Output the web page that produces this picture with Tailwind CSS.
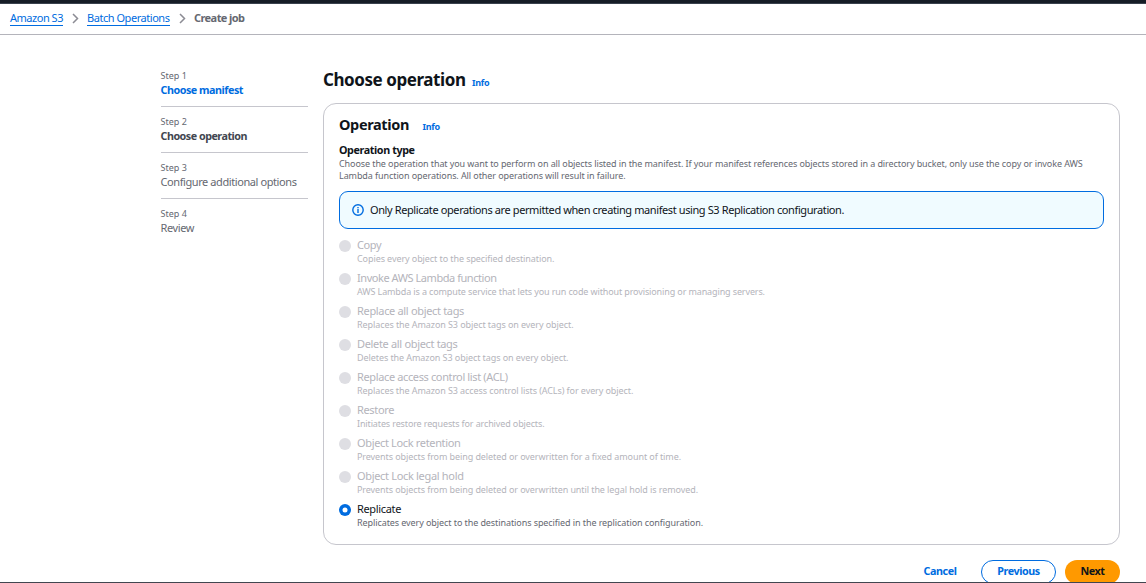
<!DOCTYPE html>
<html lang="en">
<head>
<meta charset="utf-8">
<title>Create job</title>
<script src="https://cdn.jsdelivr.net/npm/@tailwindcss/browser@4"></script>
</head>
<body class="flex h-[583px] w-[1146px] flex-col overflow-hidden border-b border-[#424650] bg-white font-['Noto_Sans',sans-serif] text-[11px] leading-[14px] text-[#0f141a] whitespace-nowrap">
<div class="h-1 shrink-0 border-b border-[#39414d] bg-[#161d26]"></div>
<nav class="flex h-[31px] shrink-0 items-start border-b border-[#b4b4bb] pt-[7px] pl-2.5">
  <a class="h-[15px] w-[53px] border-b border-[#006ce0] tracking-[-0.478px] text-[#006ce0]">Amazon S3</a>
  <svg class="mt-[2px] ml-[9px] h-[11px] w-[7px]" viewBox="0 0 7 11" fill="none" stroke="#8c8c94" stroke-width="1.5"><path d="M1 1l4.5 4.5L1 10"/></svg>
  <a class="ml-2 h-[15px] w-[83px] border-b border-[#006ce0] tracking-[-0.457px] text-[#006ce0]">Batch Operations</a>
  <svg class="mt-[2px] ml-[9px] h-[11px] w-[7px]" viewBox="0 0 7 11" fill="none" stroke="#8c8c94" stroke-width="1.5"><path d="M1 1l4.5 4.5L1 10"/></svg>
  <span class="ml-2 font-bold tracking-[-0.572px] text-[#656871]">Create job</span>
</nav>
<main class="flex min-h-0 flex-1 pl-[160px]">
  <aside class="mt-[35px] w-[148px] shrink-0 pl-[0.5px] text-[#656871]">
    <div class="h-[37px] border-b border-[#c6c6cd]"><div class="text-[9px] leading-3">Step 1</div><div class="mt-px text-[10.75px] font-bold tracking-[-0.48px] text-[#006ce0]">Choose manifest</div></div>
    <div class="h-[46px] border-b border-[#c6c6cd] pt-[9px]"><div class="text-[9px] leading-3">Step 2</div><div class="mt-px text-[10.75px] font-bold tracking-[-0.5px] text-[#424650]">Choose operation</div></div>
    <div class="h-[46px] border-b border-[#c6c6cd] pt-[9px]"><div class="text-[9px] leading-3">Step 3</div><div class="mt-px tracking-[-0.414px]">Configure additional options</div></div>
    <div class="pt-[9px]"><div class="text-[9px] leading-3">Step 4</div><div class="mt-px tracking-[-0.397px]">Review</div></div>
  </aside>
  <section class="ml-[15px] w-[797px] shrink-0">
    <div class="flex h-[68px] items-baseline pt-[33px]">
      <h1 class="w-[149px] text-[17px] leading-6 font-bold tracking-[-0.43px]">Choose operation</h1>
      <a class="text-[9px] font-bold tracking-[-0.24px] text-[#006ce0]">Info</a>
    </div>
    <div class="h-[442px] rounded-[13px] border border-[#c6c6cd] px-[15px]">
      <div class="flex items-baseline pt-[10px]">
        <h2 class="w-[83.5px] text-[14.5px] leading-5 font-bold tracking-[-0.36px]">Operation</h2>
        <a class="text-[9px] font-bold tracking-[-0.24px] text-[#006ce0]">Info</a>
      </div>
      <div class="mt-[9px] text-[10.75px] font-bold tracking-[-0.4px]">Operation type</div>
      <p class="mt-px text-[9px] leading-3 text-[#656871]"><span class="tracking-[-0.09px]">Choose the operation that you want to perform on all objects listed in the manifest. If your manifest references objects stored in a directory bucket, only use the copy or invoke AWS</span><br><span class="tracking-[-0.087px]">Lambda function operations. All other operations will result in failure.</span></p>
      <div class="mt-[9px] flex h-[38px] items-center rounded-[9px] border border-[#006ce0] bg-[#f0fbff] pl-3">
        <svg class="h-3 w-3" viewBox="0 0 12 12" fill="none" stroke="#006ce0" stroke-width="1.4"><circle cx="6" cy="6" r="5.2"/><path d="M6 2.9v1.3M6 5v4" stroke-width="1.4"/></svg>
        <span class="ml-1.5 tracking-[-0.398px]">Only Replicate operations are permitted when creating manifest using S3 Replication configuration.</span>
      </div>
      <div class="mt-[9px] grid auto-rows-[33px] text-[#b4b4bb]">
        <div class="flex"><i class="mt-[2px] mr-1.5 h-3 w-3 rounded-full bg-[#dedee3]"></i><div><div class="tracking-[-0.4px]">Copy</div><div class="text-[9px] leading-[13px] tracking-[-0.085px]">Copies every object to the specified destination.</div></div></div>
        <div class="flex"><i class="mt-[2px] mr-1.5 h-3 w-3 rounded-full bg-[#dedee3]"></i><div><div class="tracking-[-0.447px]">Invoke AWS Lambda function</div><div class="text-[9px] leading-[13px] tracking-[-0.124px]">AWS Lambda is a compute service that lets you run code without provisioning or managing servers.</div></div></div>
        <div class="flex"><i class="mt-[2px] mr-1.5 h-3 w-3 rounded-full bg-[#dedee3]"></i><div><div class="tracking-[-0.331px]">Replace all object tags</div><div class="text-[9px] leading-[13px] tracking-[-0.083px]">Replaces the Amazon S3 object tags on every object.</div></div></div>
        <div class="flex"><i class="mt-[2px] mr-1.5 h-3 w-3 rounded-full bg-[#dedee3]"></i><div><div class="tracking-[-0.331px]">Delete all object tags</div><div class="text-[9px] leading-[13px] tracking-[-0.075px]">Deletes the Amazon S3 object tags on every object.</div></div></div>
        <div class="flex"><i class="mt-[2px] mr-1.5 h-3 w-3 rounded-full bg-[#dedee3]"></i><div><div class="tracking-[-0.37px]">Replace access control list (ACL)</div><div class="text-[9px] leading-[13px] tracking-[-0.085px]">Replaces the Amazon S3 access control lists (ACLs) for every object.</div></div></div>
        <div class="flex"><i class="mt-[2px] mr-1.5 h-3 w-3 rounded-full bg-[#dedee3]"></i><div><div class="tracking-[-0.35px]">Restore</div><div class="text-[9px] leading-[13px] tracking-[-0.13px]">Initiates restore requests for archived objects.</div></div></div>
        <div class="flex"><i class="mt-[2px] mr-1.5 h-3 w-3 rounded-full bg-[#dedee3]"></i><div><div class="tracking-[-0.343px]">Object Lock retention</div><div class="text-[9px] leading-[13px] tracking-[-0.085px]">Prevents objects from being deleted or overwritten for a fixed amount of time.</div></div></div>
        <div class="flex"><i class="mt-[2px] mr-1.5 h-3 w-3 rounded-full bg-[#dedee3]"></i><div><div class="tracking-[-0.32px]">Object Lock legal hold</div><div class="text-[9px] leading-[13px] tracking-[-0.085px]">Prevents objects from being deleted or overwritten until the legal hold is removed.</div></div></div>
        <div class="flex"><svg class="mt-[2px] mr-1.5 h-3 w-3" viewBox="0 0 12 12"><circle cx="6" cy="6" r="6" fill="#006ce0"/><circle cx="6" cy="6" r="2.5" fill="#fff"/></svg><div><div class="tracking-[-0.346px] text-[#0f141a]">Replicate</div><div class="text-[9px] leading-[13px] tracking-[-0.082px] text-[#656871]">Replicates every object to the destinations specified in the replication configuration.</div></div></div>
      </div>
    </div>
    <div class="mt-[15px] flex justify-end text-[10.75px] font-bold tracking-[-0.43px]">
      <button class="mr-[24.5px] h-6 pb-[2px] text-[#006ce0]">Cancel</button>
      <button class="mr-[9px] h-6 w-[75px] rounded-full border border-[#006ce0] pb-[2px] text-[#006ce0]">Previous</button>
      <button class="h-6 w-[55px] rounded-full bg-[#ff9900] pb-[2px]">Next</button>
    </div>
  </section>
</main>
</body>
</html>
